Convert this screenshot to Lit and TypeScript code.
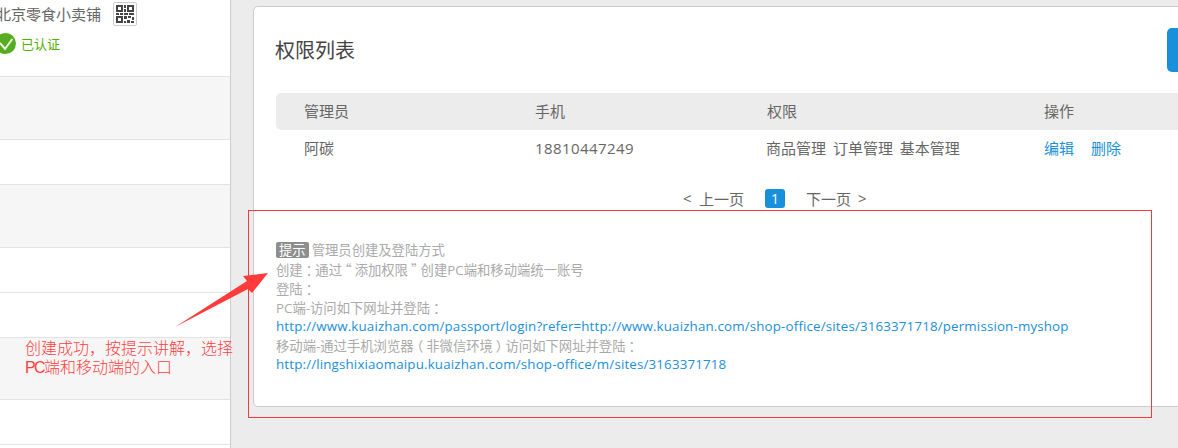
import { LitElement, html, css, svg } from "lit";
import { customElement } from "lit/decorators.js";

const qr = svg`<svg viewBox="0 0 18 18" width="18" height="18" fill="#444">
  <path fill-rule="evenodd" d="M0 0h7v7H0zM2 2v3h3V2zM11 0h7v7h-7zM13 2v3h3V2zM0 11h7v7H0zM2 13v3h3v-3z"/>
  <path d="M8 0h2v3H8zM8 4h2v3H8zM0 8h3v2H0zM4 8h3v2H4zM8 8h4v2H8zM13 8h5v2h-5zM8 11h3v3H8zM12 11h3v2h-3zM16 12h2v3h-2zM11 15h3v3h-3zM8 16h2v2H8zM15 16h3v2h-3z"/>
</svg>`;

const rows = [
  { h: 63, alt: true },
  { h: 45, alt: false },
  { h: 63, alt: true },
  { h: 45, alt: false },
  { h: 45, alt: false },
  { h: 62, alt: true },
  { h: 45, alt: false },
];

@customElement("app-root")
export class AppRoot extends LitElement {
  static styles = css`
    :host {
      display: block;
      position: relative;
      width: 1178px;
      height: 448px;
      overflow: hidden;
      background: #ececec;
      font-family: "Open Sans", "Noto Sans CJK SC", sans-serif;
      font-size: 15px;
      color: #666;
    }
    .page { display: flex; height: 448px; }
    .side {
      flex: 0 0 230px;
      box-sizing: content-box;
      background: #fff;
      border-right: 1px solid #ccc;
      overflow: hidden;
    }
    .store {
      height: 76px;
      border-bottom: 1px solid #e3e3e3;
      box-sizing: content-box;
      display: flex;
      flex-direction: column;
    }
    .name-row {
      display: flex;
      align-items: center;
      margin: 2px 0 0 -4px;
      height: 24px;
      white-space: nowrap;
    }
    .name { font-size: 15px; line-height: 24px; color: #666; width: 105px; margin-top: -1px; }
    .qr {
      box-sizing: border-box;
      width: 24px;
      height: 24px;
      margin-left: 12px;
      border: 1px solid #ccc;
      border-radius: 2px;
      display: flex;
      align-items: center;
      justify-content: center;
    }
    .verified {
      display: flex;
      align-items: center;
      margin: 7px 0 0 -5px;
      color: #52b000;
      font-size: 13px;
      height: 21px;
    }
    .verified svg { margin-right: 5px; flex: none; }
    .row { box-sizing: border-box; border-bottom: 1px solid #e3e3e3; }
    .row.alt { background: #f6f6f6; }
    .main { flex: 1; min-width: 0; padding: 6px 0 0 22px; }
    .card {
      box-sizing: border-box;
      width: 1000px;
      height: 401px;
      background: #fff;
      border: 1px solid #ccc;
      border-radius: 5px;
      padding: 0 0 0 22px;
    }
    .head {
      box-sizing: border-box;
      display: flex;
      justify-content: space-between;
      align-items: center;
      height: 86px;
      padding-bottom: 2px;
    }
    .title { font-size: 20px; color: #444; margin-left: -1px; }
    .add {
      flex: none;
      width: 85px;
      margin-top: 1px;
      height: 44px;
      background: #1890db;
      border-radius: 5px;
    }
    .table-head, .table-row {
      box-sizing: border-box;
      display: grid;
      grid-template-columns: 231px 232px 277px 1fr;
      padding: 0 0 2px 28px;
      height: 37px;
      align-items: center;
    }
    .table-head { background: #ececec; border-radius: 5px; }
    .phone { letter-spacing: 0.42px; }
    .perm { word-spacing: 3px; margin-left: -1px; }
    .ops { display: flex; gap: 17px; color: #1a8fdc; }
    .pager {
      display: flex;
      align-items: center;
      margin: 21px 0 0 407px;
      height: 20px;
      white-space: nowrap;
    }
    .chev { font-size: 15px; width: 9px; }
    .prev { margin-left: 7px; }
    .next { margin-right: 7px; }
    .cur {
      width: 20px;
      height: 19px;
      border-radius: 3px;
      background: #1890db;
      color: #fff;
      text-align: center;
      line-height: 19px;
      margin: 0 21px 0 21px;
      font-size: 14px;
      font-weight: 500;
    }
    .tip {
      margin-top: 33px;
      font-size: 13.33px;
      color: #aaa;
      white-space: nowrap;
    }
    .line { height: 19px; line-height: 19px; }
    .tag {
      display: inline-block;
      background: #8e8e8e;
      color: #fff;
      border-radius: 2px;
      height: 16px;
      line-height: 16px;
      padding: 0 3px;
      margin-right: 3px;
    }
    .line a { color: #1a8fdc; text-decoration: none; letter-spacing: 0.16px; }
    .p {
      display: inline-block;
      width: 0.95em;
      text-align: center;
      font-family: "Noto Sans CJK SC", sans-serif;
      font-feature-settings: "halt";
    }
    .frame {
      position: absolute;
      left: 248px;
      top: 210px;
      width: 904px;
      height: 208px;
      box-sizing: border-box;
      border: 1px solid #f43a3a;
    }
    .arrow { position: absolute; left: 170px; top: 268px; }
    .note {
      position: absolute;
      left: 25px;
      top: 339px;
      font-size: 16px;
      line-height: 19px;
      color: #ff4040;
      white-space: nowrap;
      font-family: "Liberation Sans", "Noto Sans CJK SC", sans-serif;
      font-weight: 300;
    }
    .latin { letter-spacing: -1.6px; }
  `;

  render() {
    return html`
      <div class="page">
        <aside class="side">
          <div class="store">
            <div class="name-row">
              <span class="name">北京零食小卖铺</span>
              <span class="qr">${qr}</span>
            </div>
            <div class="verified">
              <svg width="21" height="21" viewBox="0 0 21 21">
                <circle cx="10.5" cy="10.5" r="10.5" fill="#57ad22"/>
                <path d="M5 10l5 6 7.3-10" fill="none" stroke="#eef6e6" stroke-width="2"/>
              </svg>
              已认证
            </div>
          </div>
          ${rows.map(
            (r) => html`<div class="row ${r.alt ? "alt" : ""}" style="height:${r.h}px"></div>`
          )}
        </aside>
        <main class="main">
          <section class="card">
            <div class="head">
              <div class="title">权限列表</div>
              <div class="add"></div>
            </div>
            <div class="table-head">
              <span>管理员</span><span>手机</span><span>权限</span><span>操作</span>
            </div>
            <div class="table-row">
              <span>阿碳</span>
              <span class="phone">18810447249</span>
              <span class="perm">商品管理 订单管理 基本管理</span>
              <span class="ops"><span>编辑</span><span>删除</span></span>
            </div>
            <div class="pager">
              <span class="chev">&lt;</span>
              <span class="prev">上一页</span>
              <span class="cur">1</span>
              <span class="next">下一页</span>
              <span class="chev">&gt;</span>
            </div>
            <div class="tip">
              <div class="line"><span class="tag">提示</span>管理员创建及登陆方式</div>
              <div class="line">创建<span class="p">：</span>通过<span class="p">“</span>添加权限<span class="p">”</span>创建PC端和移动端统一账号</div>
              <div class="line">登陆<span class="p">：</span></div>
              <div class="line">PC端-访问如下网址并登陆<span class="p">：</span></div>
              <div class="line"><a>http://www.kuaizhan.com/passport/login?refer=http://www.kuaizhan.com/shop-office/sites/3163371718/permission-myshop</a></div>
              <div class="line">移动端-通过手机浏览器<span class="p">（</span>非微信环境<span class="p">）</span>访问如下网址并登陆<span class="p">：</span></div>
              <div class="line"><a>http://lingshixiaomaipu.kuaizhan.com/shop-office/m/sites/3163371718</a></div>
            </div>
          </section>
        </main>
      </div>
      <div class="frame"></div>
      <svg class="arrow" width="104" height="64" viewBox="170 268 104 64">
        <polygon points="175,327 247,281 243,276 268,273 252,293 248,289" fill="#ff3b3b"/>
      </svg>
      <div class="note">创建成功，按提示讲解，选择<br /><span class="latin">PC</span>端和移动端的入口</div>
    `;
  }
}
